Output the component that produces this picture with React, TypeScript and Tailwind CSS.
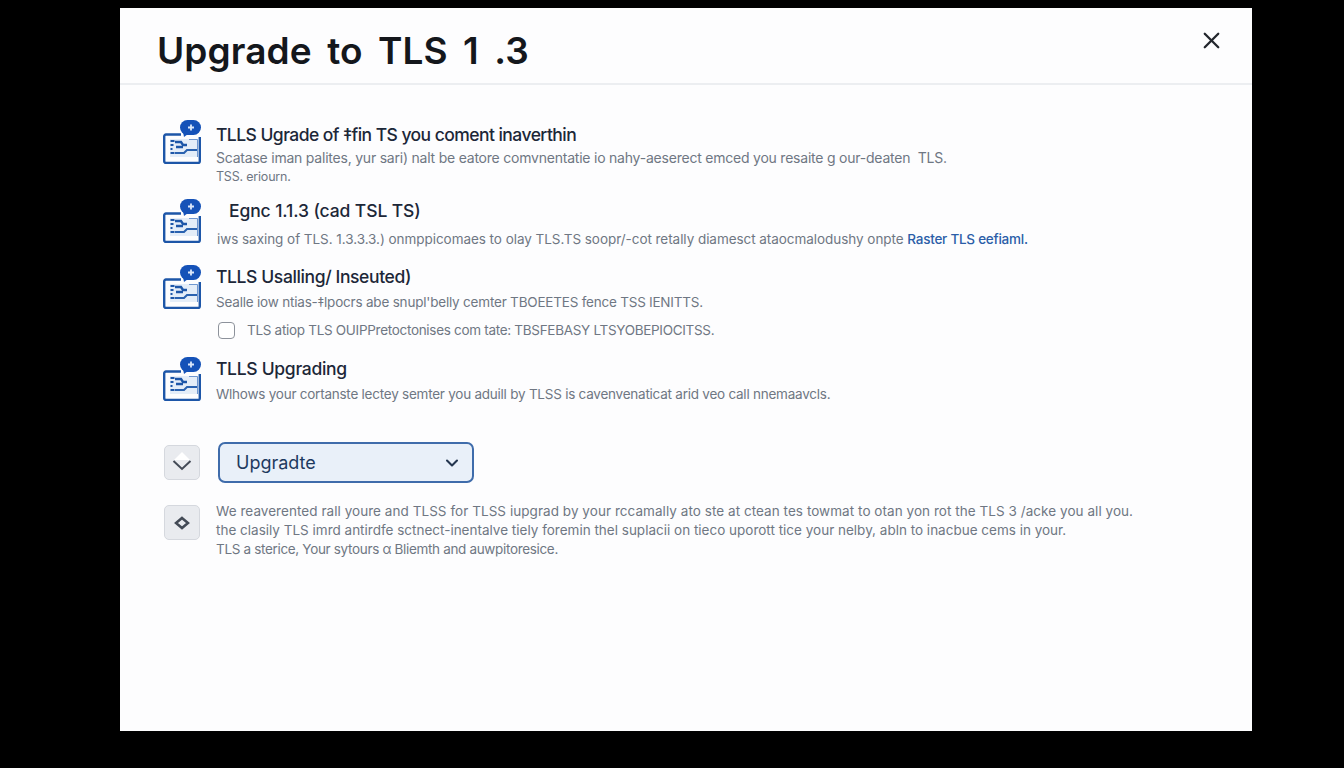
import React from 'react';
import { ChevronDown, X } from 'lucide-react';

const sans = { fontFamily: 'Inter, "Liberation Sans", sans-serif' };

function TlsIcon({ className }: { className?: string }) {
  return (
    <svg width="38" height="44" viewBox="0 0 38 44" fill="none" className={`shrink-0 ${className ?? ''}`}>
      <path d="M18 14.500H3A1.800 1.800 0 0 0 1.200 16.300v24.900A1.800 1.800 0 0 0 3 43h32a1.800 1.800 0 0 0 1.800-1.800V17" stroke="#1d56a8" strokeWidth="2.400" />
      <rect x="7" y="19" width="28" height="18" fill="#e4edf8" />
      <path d="M7.500 21h4M7.500 25h3M7.500 29h2M7.500 33h4" stroke="#1d56a8" strokeWidth="2" />
      <path d="M12 22h6l2 3h4M13 27h7" stroke="#1d56a8" strokeWidth="2.400" />
      <path d="M12 33h9l3-3h11" stroke="#2a62b0" strokeWidth="2" />
      <path d="M26 19.500h8.500V37" stroke="#6f97d0" strokeWidth="1" />
      <rect x="17" y="0" width="21" height="15" rx="7.500" fill="#1552b8" />
      <path d="M20 12l1 5 4-3z" fill="#1552b8" />
      <path d="M28 4.500v6M25 7.500h6" stroke="#dbe7fa" strokeWidth="1.800" />
    </svg>
  );
}

function Row({ title, titleClass, iconClass, children, className }: { title: string; titleClass?: string; iconClass?: string; children: React.ReactNode; className?: string }) {
  return (
    <div className={`flex items-start gap-[15px] ${className ?? ''}`}>
      <TlsIcon className={iconClass} />
      <div className="min-w-0 flex-1">
        <h3 className={`text-[17.500px] leading-[24px] font-medium text-[#1c2738] ${titleClass ?? ''}`}>{title}</h3>
        {children}
      </div>
    </div>
  );
}

function SquareButton({ children, className }: { children: React.ReactNode; className?: string }) {
  return (
    <div className={`w-[36px] h-[35px] shrink-0 rounded-[5px] border border-[#d5d8de] bg-[#e9ebef] flex items-center justify-center ${className ?? ''}`}>
      {children}
    </div>
  );
}

export default function App() {
  return (
    <div className="h-screen bg-black pt-2 pl-[120px] overflow-hidden" style={sans}>
      <div className="w-[1132px] h-[723px] bg-[#fdfdfe] flex flex-col">
        <header className="h-[77px] shrink-0 border-b-2 border-[#eceef1] pl-[37px] pr-[27px] flex items-start justify-between">
          <h1 className="text-[37px] leading-[44px] mt-[21px] font-semibold text-[#14171c] tracking-[0.1px] [word-spacing:6px]">Upgrade to TLS 1 .3</h1>
          <X className="mt-[19px] text-[#22262c]" size={27} strokeWidth={2} />
        </header>

        <main className="pl-[43px] pr-[100px] pt-[38px] text-[14px] text-[#6f7783]">
          <Row title="TLLS Ugrade of ‡fin TS you coment inaverthin" titleClass="tracking-[-0.55px]" iconClass="-mt-[3px]">
            <p className="mt-[1px] leading-[20px] tracking-[-0.22px]">Scatase iman palites, yur sari) nalt be eatore comvnentatie io nahy-aeserect emced you resaite g our-deaten&nbsp; TLS.</p>
            <p className="leading-[18px] text-[12.500px] tracking-[-0.2px]">TSS. eriourn.</p>
          </Row>

          <Row title="Egnc 1.1.3 (cad TSL TS)" titleClass="pl-[13px] tracking-[-0.1px]" className="mt-[13px]">
            <p className="mt-[6px] ml-px leading-[20px] text-[13.500px] tracking-[-0.05px] whitespace-nowrap">
              iws saxing of TLS. 1.3.3.3.) onmppicomaes to olay TLS.TS soopr/-cot retally diamesct ataocmalodushy onpte{' '}
              <span className="text-[#2b5ea8] font-medium tracking-[-0.25px]">Raster TLS eefiaml.</span>
            </p>
          </Row>

          <Row title="TLLS Usalling/ Inseuted)" titleClass="tracking-[-0.38px]" className="mt-[16px]">
            <p className="mt-[3px] leading-[20px] text-[13.500px] tracking-[-0.2px]">Sealle iow ntias-‡lpocrs abe snupl'belly cemter TBOEETES fence TSS lENITTS.</p>
            <div className="mt-[8px] flex items-center gap-[12px] ml-[2px]">
              <span className="w-[17px] h-[17px] rounded-[4px] border-[1.500px] border-[#8d929b] bg-white shrink-0" />
              <span className="leading-[20px] text-[13.500px] tracking-[-0.3px]">TLS atiop TLS OUIPPretoctonises com tate: TBSFEBASY LTSYOBEPIOCITSS.</span>
            </div>
          </Row>

          <Row title="TLLS Upgrading" titleClass="tracking-[-0.3px]" className="mt-[17px]">
            <p className="mt-[3px] leading-[20px] text-[13.500px] tracking-[-0.24px]">Wlhows your cortanste lectey semter you aduill by TLSS is cavenvenaticat arid veo call nnemaavcls.</p>
          </Row>

          <div className="mt-[38px] flex items-center gap-[18px] ml-[1px]">
            <SquareButton className="-mt-px">
              <svg width="20" height="20" viewBox="0 0 20 20" fill="none">
                <path d="M10 0l8 8H2z" fill="#fff" />
                <path d="M1.500 9 10 17l8.500-8" stroke="#434a56" strokeWidth="2" />
              </svg>
            </SquareButton>
            <div className="w-[256px] h-[41px] rounded-[7px] border-2 border-[#3f6cab] bg-[#e9f0f9] pl-[16px] pr-[10px] flex items-center justify-between">
              <span className="text-[18px] text-[#1e3a5f] -mt-px">Upgradte</span>
              <ChevronDown size={20} strokeWidth={2.500} className="text-[#24364f]" />
            </div>
          </div>

          <div className="mt-[22px] flex items-start gap-[16px] ml-[1px]">
            <SquareButton>
              <svg width="18" height="14" viewBox="0 0 18 14" fill="none">
                <path d="M9 2l6 5-6 5-6-5z" stroke="#434a56" strokeWidth="2.500" />
              </svg>
            </SquareButton>
            <div className="text-[13.500px] leading-[19px] whitespace-nowrap -mt-[3px]">
              <p className="tracking-[0.05px]">We reaverented rall youre and TLSS for TLSS iupgrad by your rccamally ato ste at ctean tes towmat to otan yon rot the TLS 3 /acke you all you.</p>
              <p>the clasily TLS imrd antirdfe sctnect-inentalve tiely foremin thel suplacii on tieco uporott tice your nelby, abln to inacbue cems in your.</p>
              <p className="tracking-[-0.33px]">TLS a sterice, Your sytours α Bliemth and auwpitoresice.</p>
            </div>
          </div>
        </main>
      </div>
    </div>
  );
}
